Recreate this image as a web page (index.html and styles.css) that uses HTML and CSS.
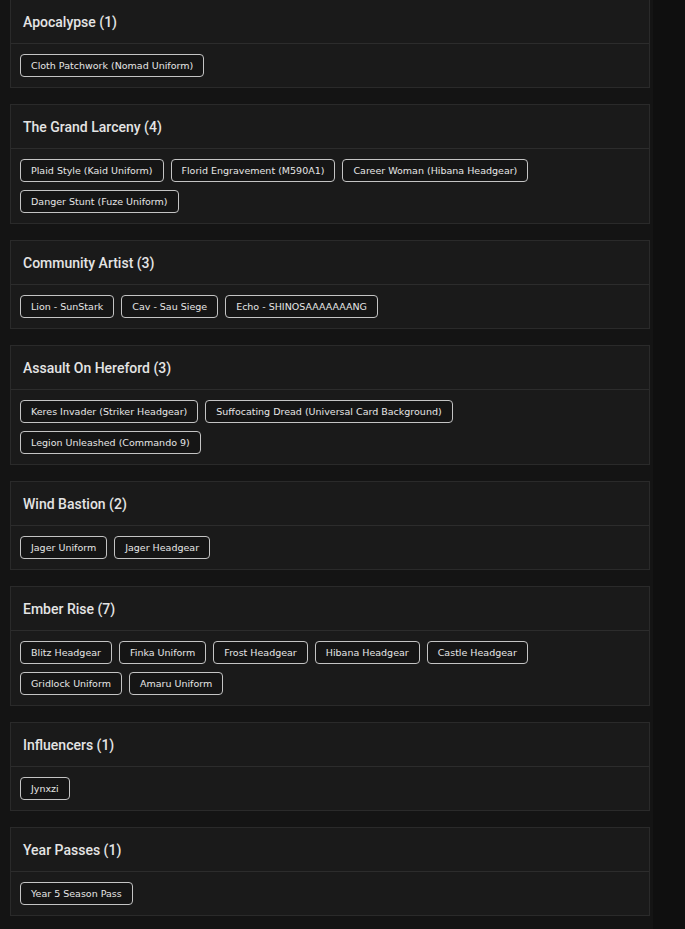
FILE: index.html
```html
<!DOCTYPE html>
<html>
<head>
<meta charset="utf-8">
<link rel="stylesheet" href="styles.css">
</head>
<body>
<div class="page">
  <div class="list">
    <section class="card">
      <h2 class="card-title">Apocalypse (1)</h2>
      <div class="chips">
        <span class="chip">Cloth Patchwork (Nomad Uniform)</span>
      </div>
    </section>
    <section class="card">
      <h2 class="card-title">The Grand Larceny (4)</h2>
      <div class="chips">
        <span class="chip">Plaid Style (Kaid Uniform)</span>
        <span class="chip">Florid Engravement (M590A1)</span>
        <span class="chip">Career Woman (Hibana Headgear)</span>
        <span class="chip">Danger Stunt (Fuze Uniform)</span>
      </div>
    </section>
    <section class="card">
      <h2 class="card-title">Community Artist (3)</h2>
      <div class="chips">
        <span class="chip">Lion - SunStark</span>
        <span class="chip">Cav - Sau Siege</span>
        <span class="chip">Echo - SHINOSAAAAAAANG</span>
      </div>
    </section>
    <section class="card">
      <h2 class="card-title">Assault On Hereford (3)</h2>
      <div class="chips">
        <span class="chip">Keres Invader (Striker Headgear)</span>
        <span class="chip">Suffocating Dread (Universal Card Background)</span>
        <span class="chip">Legion Unleashed (Commando 9)</span>
      </div>
    </section>
    <section class="card">
      <h2 class="card-title">Wind Bastion (2)</h2>
      <div class="chips">
        <span class="chip">Jager Uniform</span>
        <span class="chip">Jager Headgear</span>
      </div>
    </section>
    <section class="card">
      <h2 class="card-title">Ember Rise (7)</h2>
      <div class="chips">
        <span class="chip">Blitz Headgear</span>
        <span class="chip">Finka Uniform</span>
        <span class="chip">Frost Headgear</span>
        <span class="chip">Hibana Headgear</span>
        <span class="chip">Castle Headgear</span>
        <span class="chip">Gridlock Uniform</span>
        <span class="chip">Amaru Uniform</span>
      </div>
    </section>
    <section class="card">
      <h2 class="card-title">Influencers (1)</h2>
      <div class="chips">
        <span class="chip">Jynxzi</span>
      </div>
    </section>
    <section class="card">
      <h2 class="card-title">Year Passes (1)</h2>
      <div class="chips">
        <span class="chip">Year 5 Season Pass</span>
      </div>
    </section>
  </div>
</div>
</body>
</html>
```

FILE: styles.css
```css
html, body {
  margin: 0;
  padding: 0;
  background: #0f0f0f;
}
body {
  font-family: "DejaVu Sans", "Noto Sans", sans-serif;
  color: #e4e4e4;
}
.page {
  width: 653px;
  min-height: 929px;
  background: #141414;
  overflow: hidden;
}
.list {
  display: flex;
  flex-direction: column;
  gap: 16px;
  padding: 0 3px 20px 10px;
  margin-top: -1px;
}
.card {
  width: 640px;
  box-sizing: border-box;
  background: #1a1a1a;
  border: 1px solid #2a2a2a;
}
.card-title {
  margin: 0;
  height: 43px;
  display: flex;
  align-items: center;
  padding: 0 12px;
  font-family: Roboto, "Liberation Sans", sans-serif;
  font-size: 14px;
  font-weight: 500;
  color: #e4e4e4;
  border-bottom: 1px solid #2c2c2c;
}
.chips {
  display: flex;
  flex-wrap: wrap;
  gap: 8px 7px;
  padding: 10px 16px 10px 9px;
}
.chip {
  display: inline-block;
  box-sizing: border-box;
  height: 23px;
  line-height: 21px;
  padding: 0 10px;
  font-size: 9.5px;
  color: #e6e6e6;
  background: #151515;
  border: 1px solid #c4c4c4;
  border-radius: 4px;
  white-space: nowrap;
}
```
